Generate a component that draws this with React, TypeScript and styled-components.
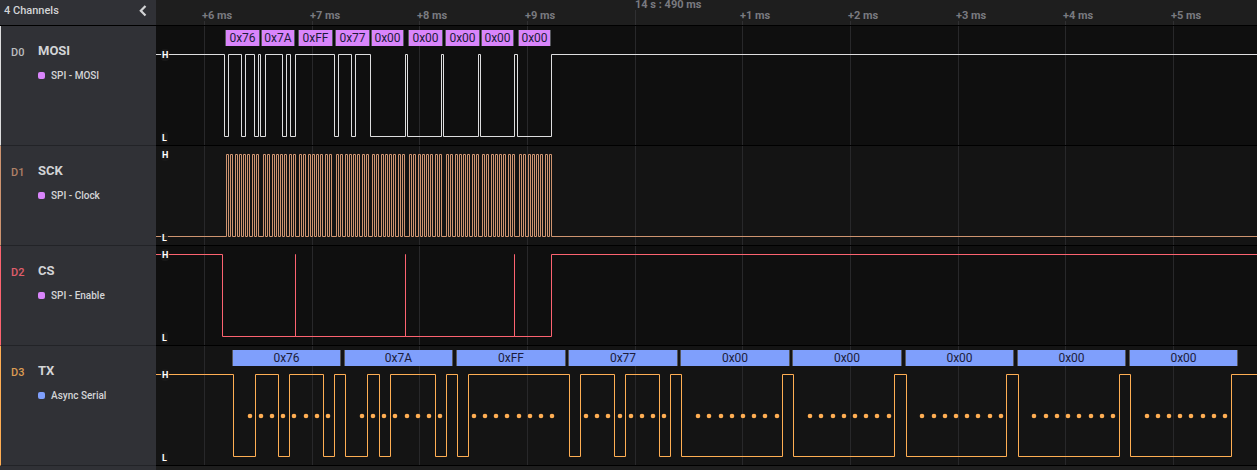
import React from "react";
import styled, { createGlobalStyle } from "styled-components";

const GlobalStyle = createGlobalStyle`
  * { box-sizing: border-box; }
  body {
    margin: 0;
    background: #1e1e1e;
    font-family: Roboto, "Liberation Sans", sans-serif;
    color: #d3d4d6;
  }
`;

const SIDEBAR = 156;

const Screen = styled.main`
  display: flex;
  flex-direction: column;
  min-height: 100vh;
  overflow: hidden;
`;

const Row = styled.section<{ $height: number }>`
  display: flex;
  height: ${(p) => p.$height}px;
  border-bottom: 1px solid #000;
`;

const Side = styled.div`
  flex: 0 0 ${SIDEBAR}px;
  background: #303136;
`;

const SideHeader = styled(Side)`
  display: flex;
  align-items: center;
  justify-content: space-between;
  padding: 0 6px 4px 4px;
  font-size: 11px;
  font-weight: 500;
`;

const Collapse = styled.button`
  display: flex;
  padding: 0;
  border: 0;
  background: none;
  color: #d3d4d6;
  cursor: pointer;
`;

const Ruler = styled.div`
  position: relative;
  flex: 1;
  min-width: 0;
  overflow: hidden;
  background: #1e1e1e;
`;

const Tick = styled.span<{ $major?: boolean }>`
  position: absolute;
  top: ${(p) => (p.$major ? 0 : 9)}px;
  font-size: 11px;
  line-height: ${(p) => (p.$major ? 10 : 14)}px;
  font-weight: 700;
  white-space: nowrap;
  color: #797a80;
`;

const ChannelSide = styled(Side)<{ $color: string }>`
  display: flex;
  padding: 16px 8px 0 10px;
  border-left: 1px solid ${(p) => p.$color};
  border-bottom: 1px solid #222327;
  margin-bottom: -1px;
`;

const ChannelId = styled.span<{ $color: string }>`
  flex: 0 0 27px;
  padding-top: 2px;
  font-size: 11px;
  line-height: 18px;
  font-weight: 500;
  color: ${(p) => p.$color};
`;

const ChannelInfo = styled.div`
  display: flex;
  flex-direction: column;
  gap: 8px;
`;

const ChannelName = styled.h2`
  margin: 0;
  font-size: 13px;
  line-height: 18px;
  font-weight: 700;
`;

const Analyzer = styled.div`
  display: flex;
  align-items: center;
  gap: 6px;
  font-size: 10px;
  line-height: 16px;
  font-weight: 500;
  white-space: nowrap;
`;

const Swatch = styled.i<{ $color: string }>`
  width: 7px;
  height: 7px;
  margin-bottom: 1px;
  border-radius: 2px;
  background: ${(p) => p.$color};
`;

const Plot = styled.div<{ $alt?: boolean }>`
  position: relative;
  flex: 1;
  min-width: 0;
  overflow: hidden;
  background: ${(p) => (p.$alt ? "#141414" : "#0f0f0f")};
`;

const Canvas = styled.svg`
  display: block;
  width: 100%;
  height: 100%;
`;

const Level = styled.span<{ $top: number }>`
  position: absolute;
  left: 5px;
  top: ${(p) => p.$top}px;
  padding: 0 1px;
  border-radius: 3px;
  background: rgba(26, 26, 26, 0.8);
  font-size: 9px;
  line-height: 12px;
  font-weight: 700;
  color: #fff;
`;

const Bubble = styled.span<{ $color: string }>`
  position: absolute;
  top: 4px;
  height: 16px;
  border: solid #55565c;
  border-width: 0 1px;
  background: ${(p) => p.$color};
  color: #1c1c3a;
  font-size: 12px;
  line-height: 16px;
  text-align: center;
  overflow: hidden;
`;

const Footer = styled.footer`
  display: flex;
  flex: 1;
`;

type Box = [from: number, to: number, text: string];

interface Channel {
  id: string;
  name: string;
  analyzer: string;
  color: string;
  idColor: string;
  swatch: string;
  height: number;
  high: number;
  startHigh: boolean;
  edges: number[];
  boxes?: Box[];
  dots?: number[];
}

const PURPLE = "#d985fb";
const BLUE = "#7f9ffc";

const clockStarts = [226, 263, 299, 336, 372, 409, 446, 482, 519];
const clockEdges = clockStarts.flatMap((start) =>
  Array.from({ length: 8 }, (_, i) => [
    Math.round(start + i * 4.25),
    Math.round(start + i * 4.25 + 2.1),
  ]).flat()
);

const channels: Channel[] = [
  {
    id: "D0", name: "MOSI", analyzer: "SPI - MOSI",
    color: "#dededf", idColor: "#bcbdbf", swatch: PURPLE,
    height: 120, high: 28, startHigh: true,
    edges: [
      224, 228, 241, 245, 254, 258, 260, 265, 282, 286, 290, 295, 334, 338,
      351, 355, 370, 405, 407, 441, 443, 478, 480, 514, 517, 551,
    ],
    boxes: [
      [225, 260, "0x76"], [261, 295, "0x7A"], [298, 333, "0xFF"],
      [335, 370, "0x77"], [371, 404, "0x00"], [408, 443, "0x00"],
      [445, 480, "0x00"], [481, 514, "0x00"], [518, 551, "0x00"],
    ],
  },
  {
    id: "D1", name: "SCK", analyzer: "SPI - Clock",
    color: "#ce9470", idColor: "#b08267", swatch: PURPLE,
    height: 100, high: 8, startHigh: false, edges: clockEdges,
  },
  {
    id: "D2", name: "CS", analyzer: "SPI - Enable",
    color: "#fc6370", idColor: "#e15e6b", swatch: PURPLE,
    height: 100, high: 8, startHigh: true,
    edges: [222, 295, 295, 405, 405, 514, 514, 551],
  },
  {
    id: "D3", name: "TX", analyzer: "Async Serial",
    color: "#ffae53", idColor: "#dc9c53", swatch: BLUE,
    height: 120, high: 28, startHigh: true,
    edges: [
      233, 255, 278, 289, 323, 334, 345, 367, 379, 390, 435, 446, 457, 468,
      569, 580, 614, 625, 659, 670, 681, 782, 793, 894, 906, 1006, 1018,
      1119, 1130, 1231,
    ],
    boxes: [
      [232, 341, "0x76"], [344, 453, "0x7A"], [456, 566, "0xFF"],
      [568, 678, "0x77"], [680, 790, "0x00"], [792, 902, "0x00"],
      [905, 1014, "0x00"], [1017, 1126, "0x00"], [1129, 1238, "0x00"],
    ],
    dots: [
      250, 261, 272, 283, 294, 306, 317, 328,
      362, 373, 384, 395, 407, 418, 429, 440,
      474, 485, 496, 507, 519, 530, 541, 552,
      586, 597, 608, 620, 631, 642, 653, 664,
      698, 709, 721, 732, 743, 754, 765, 777,
      810, 821, 833, 844, 855, 866, 877, 889,
      922, 934, 945, 956, 967, 978, 990, 1001,
      1034, 1046, 1057, 1068, 1079, 1091, 1102, 1113,
      1147, 1158, 1169, 1180, 1191, 1203, 1214, 1225,
    ],
  },
];

const ticks: { x: number; label: string; major?: boolean }[] = [
  { x: 204, label: "+6 ms" },
  { x: 312, label: "+7 ms" },
  { x: 419, label: "+8 ms" },
  { x: 527, label: "+9 ms" },
  { x: 635, label: "14 s : 490 ms", major: true },
  { x: 742, label: "+1 ms" },
  { x: 850, label: "+2 ms" },
  { x: 958, label: "+3 ms" },
  { x: 1065, label: "+4 ms" },
  { x: 1173, label: "+5 ms" },
];

const SWING = 82;
const FAR = 8000;

function wavePath(c: Channel) {
  const hi = c.high + 0.5;
  const lo = hi + SWING;
  let level = c.startHigh;
  let d = `M0 ${level ? hi : lo}`;
  for (const edge of c.edges) {
    level = !level;
    d += `H${edge - SIDEBAR + 0.5}V${level ? hi : lo}`;
  }
  return `${d}H${FAR}`;
}

function Wave({ channel: c }: { channel: Channel }) {
  return (
    <Canvas role="img" aria-label={`${c.name} waveform`}>
      {ticks.map((t) => (
        <rect key={t.x} x={t.x - SIDEBAR} y={0} width={1} height={c.height} fill="#28282a" />
      ))}
      <path d={wavePath(c)} fill="none" stroke={c.color} strokeWidth={1} />
      {c.dots?.map((x) => (
        <circle key={x} cx={x - SIDEBAR} cy={c.high + 42} r={2.3} fill={c.color} />
      ))}
    </Canvas>
  );
}

export default function App() {
  return (
    <Screen>
      <GlobalStyle />
      <Row as="header" $height={26}>
        <SideHeader>
          4 Channels
          <Collapse aria-label="Collapse channels">
            <svg width="14" height="14" viewBox="0 0 14 14" fill="none" stroke="currentColor" strokeWidth="2.2">
              <path d="M9.500 2L4.800 6.800L9.500 11.600" />
            </svg>
          </Collapse>
        </SideHeader>
        <Ruler>
          <Canvas aria-hidden="true">
            {ticks.map((t) => (
              <rect key={t.x} x={t.x - SIDEBAR} y={t.major ? 10 : 21} width={1} height={20} fill="#303032" />
            ))}
          </Canvas>
          {ticks.map((t) => (
            <Tick key={t.x} $major={t.major} style={{ left: t.x - SIDEBAR - (t.major ? 0 : 2) }}>
              {t.label}
            </Tick>
          ))}
        </Ruler>
      </Row>
      {channels.map((c, i) => (
        <Row key={c.id} $height={c.height}>
          <ChannelSide $color={c.color}>
            <ChannelId $color={c.idColor}>{c.id}</ChannelId>
            <ChannelInfo>
              <ChannelName>{c.name}</ChannelName>
              <Analyzer>
                <Swatch $color={c.swatch} />
                {c.analyzer}
              </Analyzer>
            </ChannelInfo>
          </ChannelSide>
          <Plot $alt={i % 2 === 1}>
            <Wave channel={c} />
            <Level $top={c.high - 5}>H</Level>
            <Level $top={c.high + SWING - 4}>L</Level>
            {c.boxes?.map(([from, to, text]) => (
              <Bubble key={from} $color={c.swatch} style={{ left: from - SIDEBAR, width: to - from }}>
                {text}
              </Bubble>
            ))}
          </Plot>
        </Row>
      ))}
      <Footer>
        <Side />
      </Footer>
    </Screen>
  );
}
